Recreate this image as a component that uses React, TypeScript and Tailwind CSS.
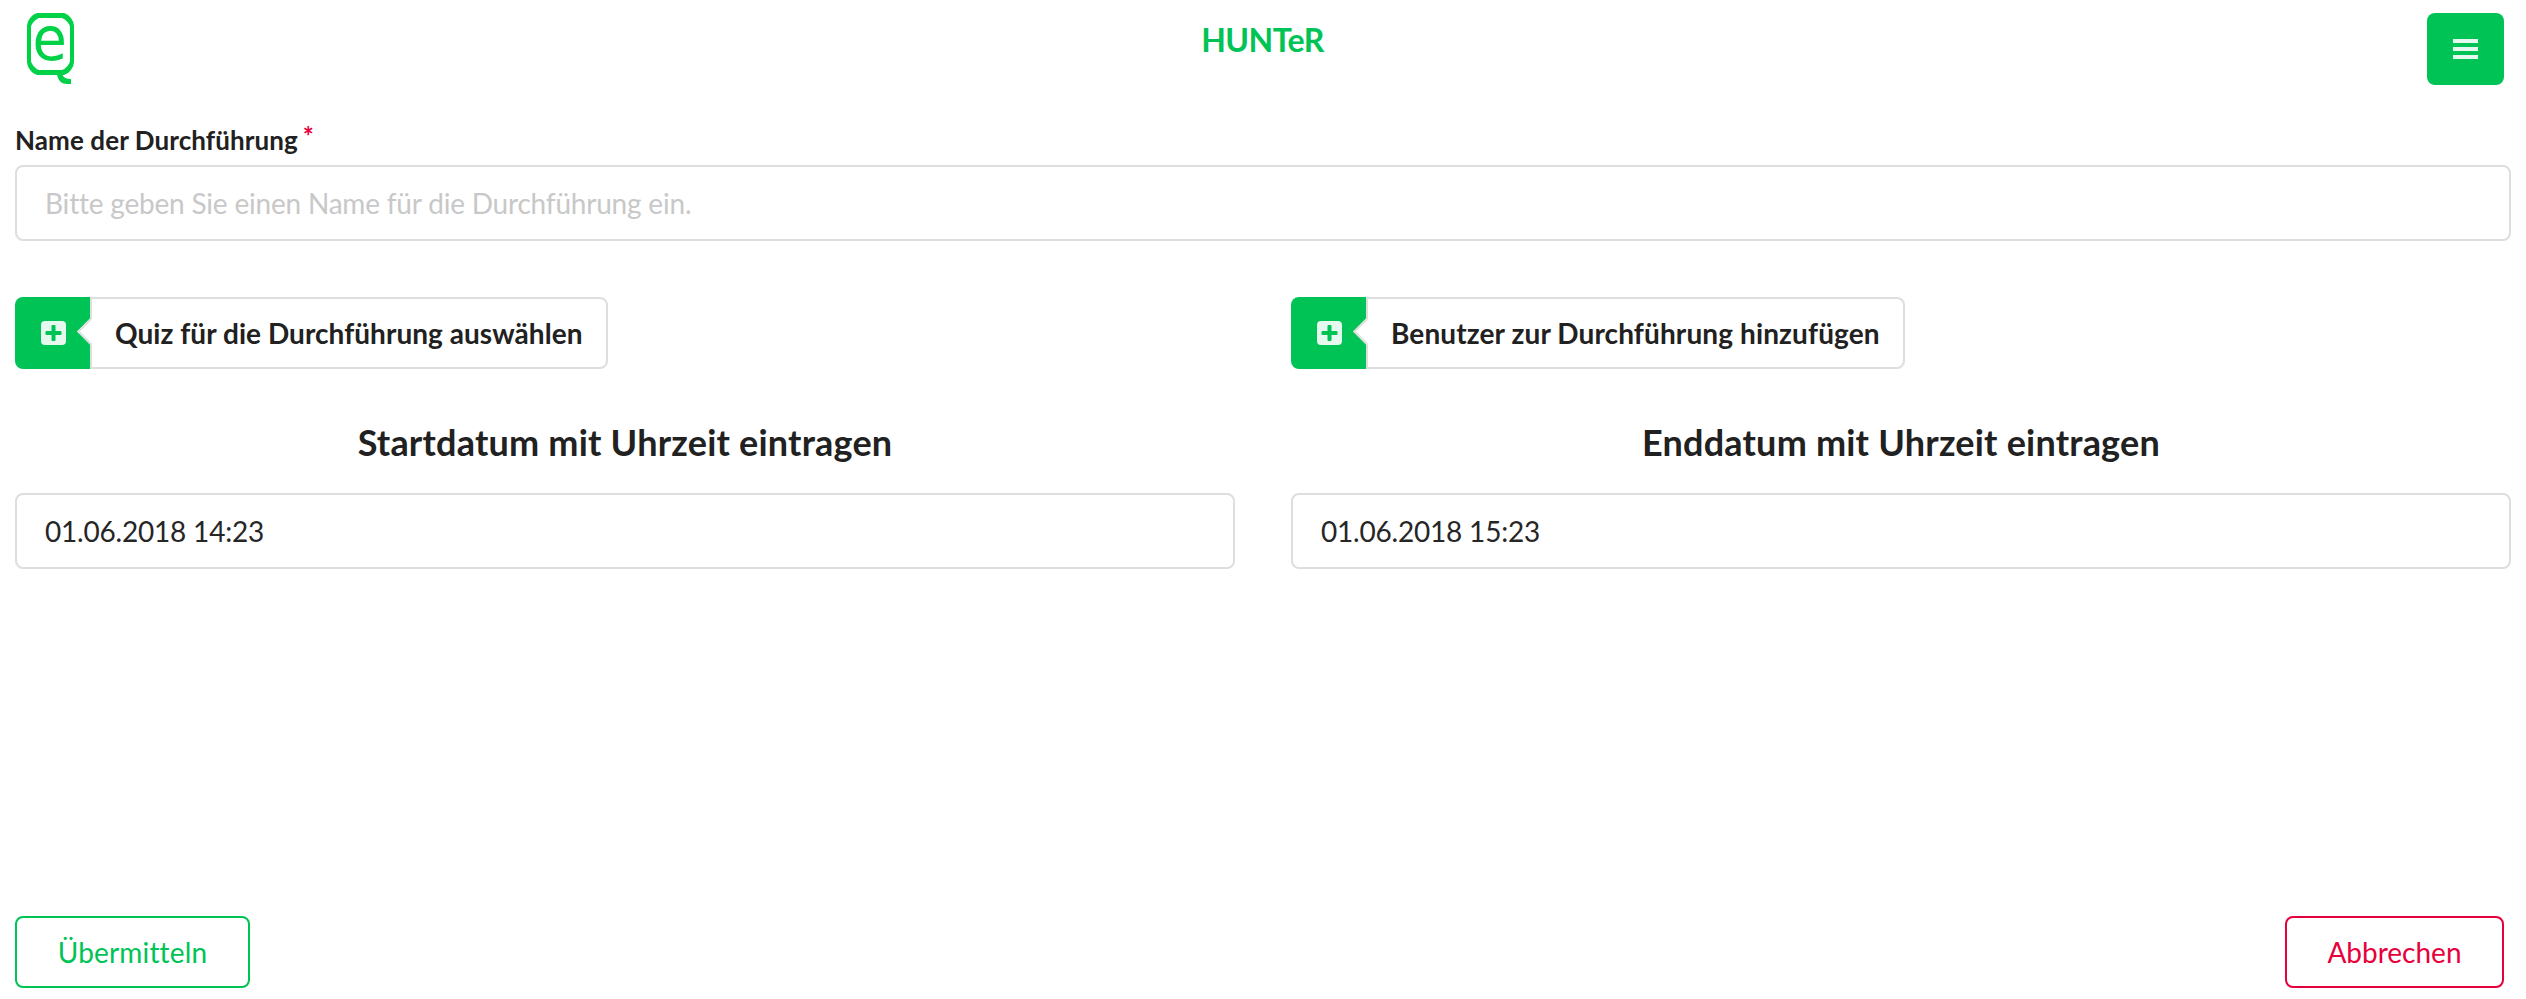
import React from "react";

function Logo() {
  return (
    <svg
      width="47"
      height="71"
      viewBox="0 0 47 71"
      className="block overflow-visible"
      fill="none"
    >
      <path
        fill="#00d147"
        fillRule="evenodd"
        d="M10 0H37Q41 1 44 5Q47 9 47 13V49Q47 53 44 57Q41 61 37 62H35.500Q37 66 44 66V71H40Q32 71 30 62H10Q6 61 3 57Q0 53 0 49V13Q0 9 3 5Q6 1 10 0ZM12 5Q9 6 6.500 9Q4 12 4 14V48Q4 50 6.500 53Q9 56 12 57H35Q38 56 40.500 53Q43 50 43 48V14Q43 12 40.500 9Q38 6 35 5Z"
      />
      <text
        transform="translate(5.6 47.1) scale(0.915 1)"
        fontFamily="DejaVu Sans, sans-serif"
        fontSize="61"
        fill="#00d147"
      >
        e
      </text>
    </svg>
  );
}

function PlusSquare() {
  return (
    <svg width="25" height="24" viewBox="0 0 25 24" className="block">
      <path
        fill="#ffffff"
        fillOpacity="0.9"
        fillRule="evenodd"
        d="M4 0H21Q25 0 25 4V20Q25 24 21 24H4Q0 24 0 20V4Q0 0 4 0ZM11.500 4Q10.500 4 10.500 5V10H5.500Q4.500 10 4.500 11V13Q4.500 14 5.500 14H10.500V19Q10.500 20 11.500 20H13.500Q14.500 20 14.500 19V14H19.500Q20.500 14 20.500 13V11Q20.500 10 19.500 10H14.500V5Q14.500 4 13.500 4Z"
      />
    </svg>
  );
}

function LabeledButton({ label, className }: { label: string; className: string }) {
  return (
    <button
      type="button"
      className={`flex h-[72px] text-[28px] leading-[28px] font-bold whitespace-nowrap ${className}`}
    >
      <span className="flex h-full w-[75px] shrink-0 items-center rounded-l-lg bg-[#00c355] pl-[26px]">
        <PlusSquare />
      </span>
      <span className="relative flex h-full grow items-center rounded-r-lg border-2 border-[#dededf] pl-[23px]">
        <span className="absolute top-[23px] left-[-11px] size-[19px] rotate-45 border-b-2 border-l-2 border-[#dededf] bg-white" />
        {label}
      </span>
    </button>
  );
}

function DateField({ title, value }: { title: string; value: string }) {
  return (
    <div className="flex flex-col">
      <h3 className="mb-[28px] text-center text-[36px] leading-[46px] font-bold tracking-[0.2px]">{title}</h3>
      <input
        defaultValue={value}
        className="h-[76px] w-full rounded-lg border-2 border-[#dededf] px-[28px] text-[28px] tracking-[-0.2px] text-[#262626] outline-none"
      />
    </div>
  );
}

export default function App() {
  return (
    <div className="flex h-[999px] flex-col bg-white pr-[15px] pl-[15px] font-['Lato',sans-serif] text-[#212121]">
      <header className="grid h-[85px] grid-cols-[1fr_auto_1fr] items-start pt-[13px] pr-[7px] pl-3">
        <Logo />
        <h1 className="pt-[6px] pr-[6px] text-[32px] leading-[42px] font-bold tracking-[-0.5px] text-[#00c355]">
          HUNTeR
        </h1>
        <button
          type="button"
          className="flex h-[72px] w-[77px] items-center justify-center justify-self-end rounded-lg bg-[#00c355]"
        >
          <span className="flex w-[25px] flex-col gap-1">
            <span className="h-1 bg-white/90" />
            <span className="h-1 bg-white/90" />
            <span className="h-1 bg-white/90" />
          </span>
        </button>
      </header>

      <div className="mt-[35px] flex h-[45px] items-start text-[26px] leading-[40px] font-bold tracking-[0.09px]">
        Name der Durchführung
        <span className="mt-[-4px] ml-[5px] text-[#e6003c]">*</span>
      </div>
      <input
        placeholder="Bitte geben Sie einen Name für die Durchführung ein."
        className="h-[76px] w-full shrink-0 rounded-lg border-2 border-[#dededf] px-[28px] text-[28px] tracking-[-0.2px] outline-none placeholder:text-[#c8c8c8]"
      />

      <div className="mt-[56px] grid grid-cols-2 gap-x-[56px]">
        <LabeledButton className="w-[593px] tracking-[0.05px]" label="Quiz für die Durchführung auswählen" />
        <LabeledButton className="w-[614px] tracking-[0.12px]" label="Benutzer zur Durchführung hinzufügen" />
      </div>
      <div className="mt-[50px] grid grid-cols-2 gap-x-[56px]">
        <DateField title="Startdatum mit Uhrzeit eintragen" value="01.06.2018 14:23" />
        <DateField title="Enddatum mit Uhrzeit eintragen" value="01.06.2018 15:23" />
      </div>

      <footer className="mt-auto mb-[11px] flex justify-between pr-[7px] text-[28px] leading-[28px]">
        <button
          type="button"
          className="h-[72px] w-[235px] rounded-lg border-2 border-[#00c355] tracking-[0.15px] text-[#00c355]"
        >
          Übermitteln
        </button>
        <button type="button" className="h-[72px] w-[219px] rounded-lg border-2 border-[#e6003c] text-[#e6003c]">
          Abbrechen
        </button>
      </footer>
    </div>
  );
}
